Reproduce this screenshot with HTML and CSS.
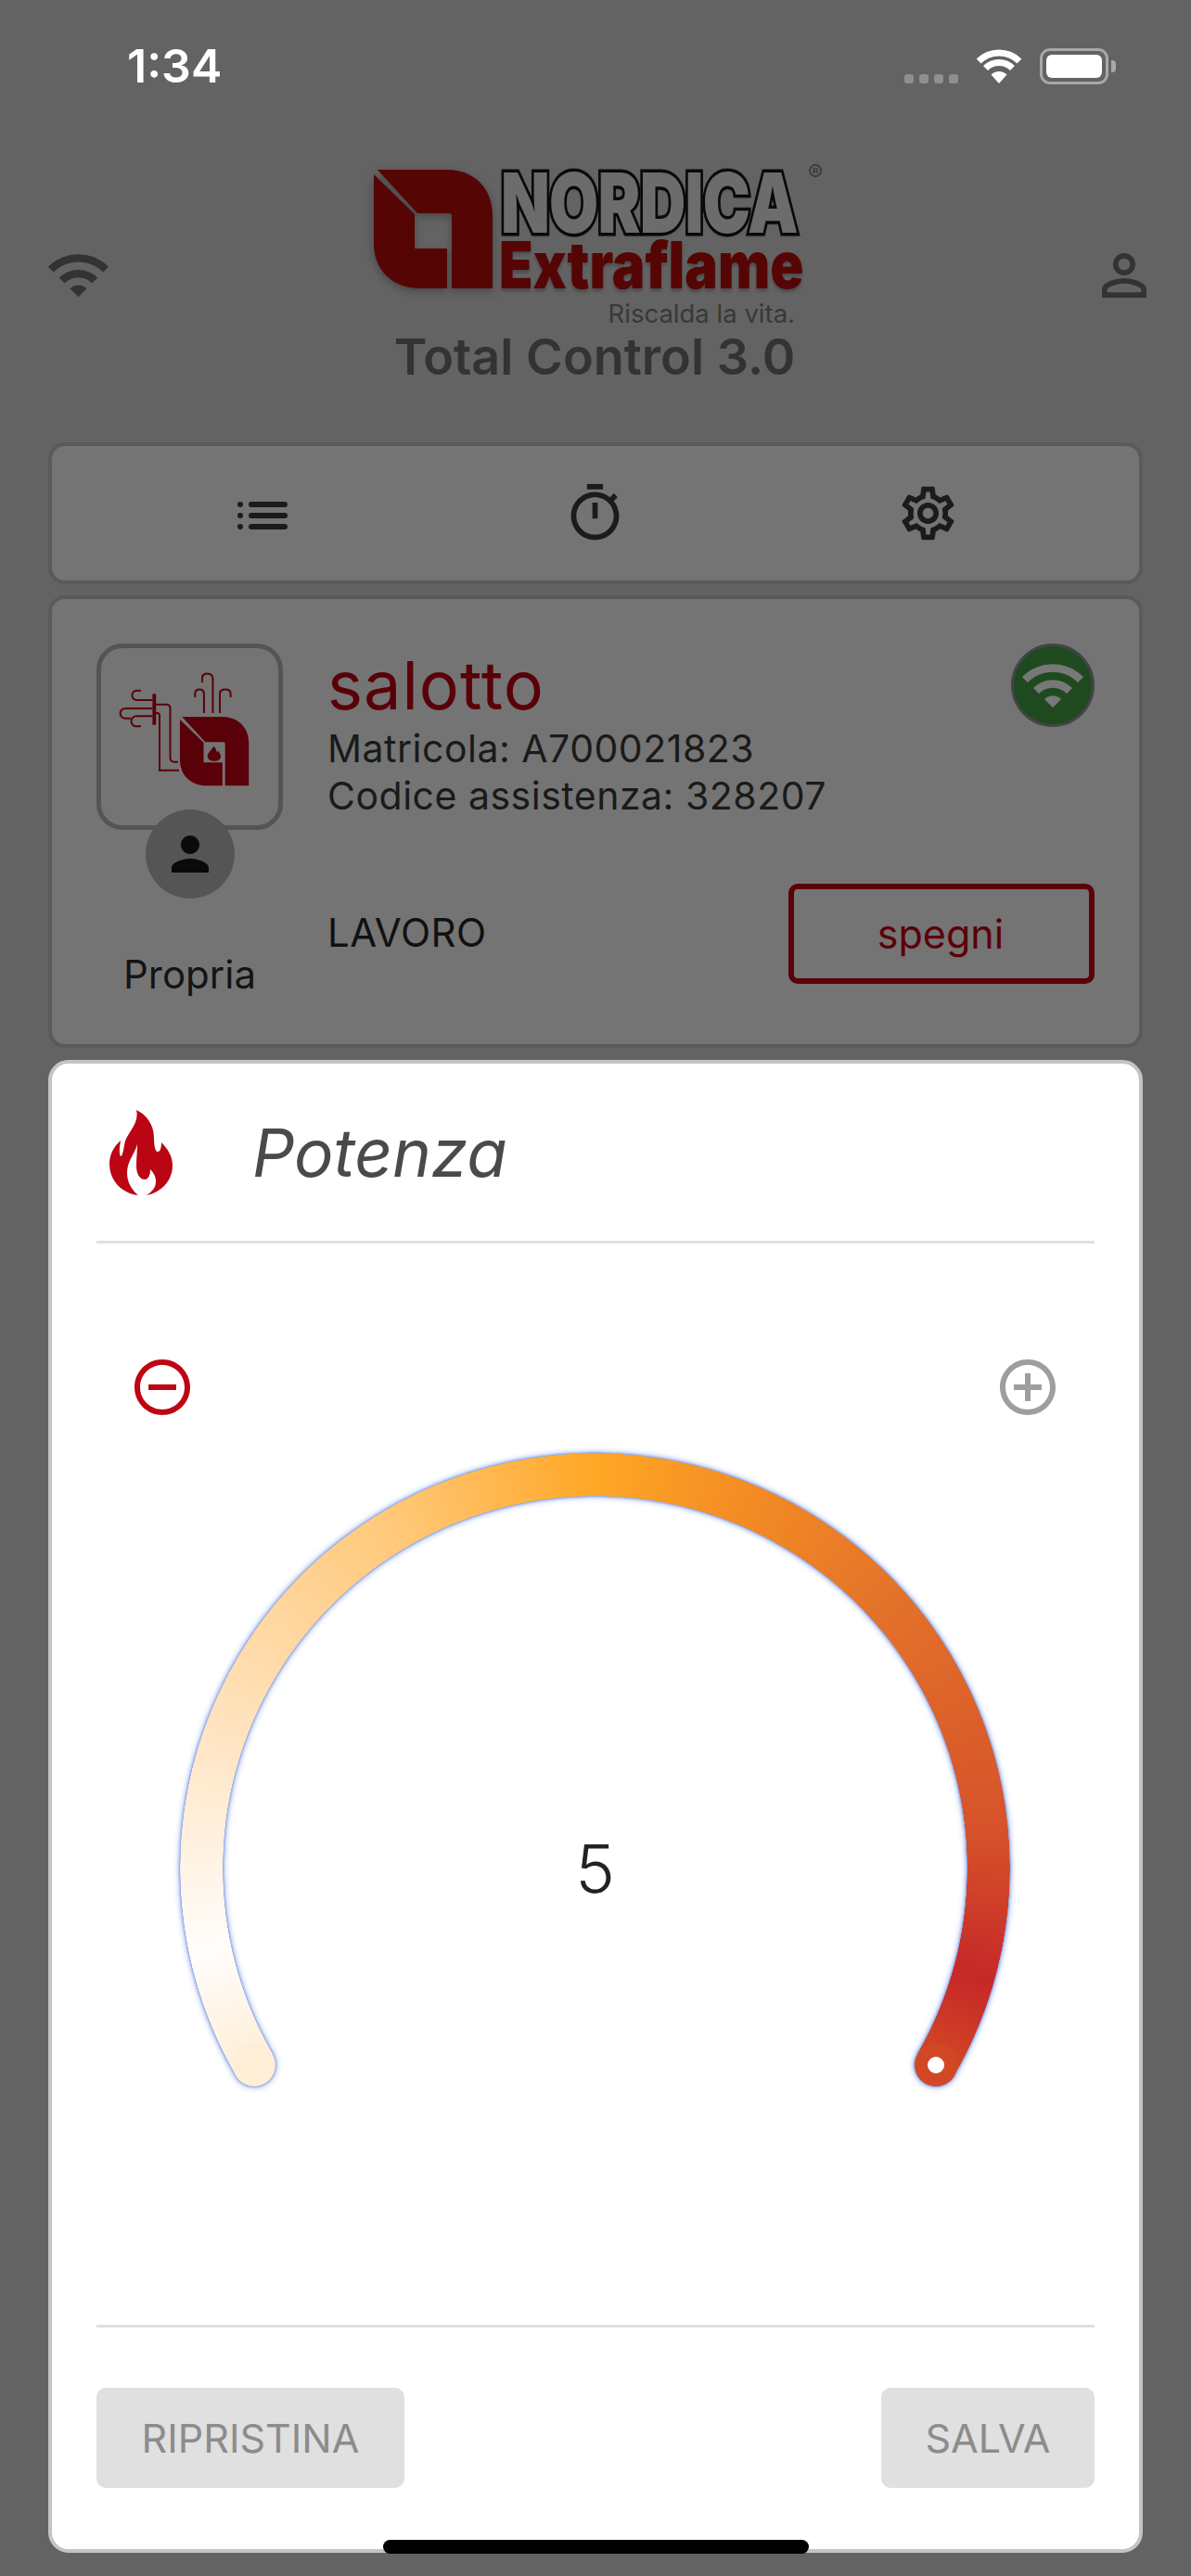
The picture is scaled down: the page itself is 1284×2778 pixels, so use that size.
FILE: index.html
```html
<!DOCTYPE html>
<html lang="it">
<head>
<meta charset="utf-8">
<title>Total Control 3.0</title>
<link rel="stylesheet" href="styles.css">
</head>
<body>
<div class="app">
  <div class="status">
    <span class="time">1:34</span>
    <div class="status-right">
      <div class="signal"><i></i><i></i><i></i><i></i></div>
      <svg class="status-wifi" viewBox="0 0 50 38"><g class="sw-arcs"><path d="M3.1 14.1A31 31 0 0 1 46.9 14.1"/><path d="M10.5 21.5A20.5 20.5 0 0 1 39.5 21.5"/></g><path class="sw-dot" d="M25 38L16.5 28.5A12 12 0 0 1 33.5 28.5Z"/></svg>
      <div class="battery"><div class="battery-fill"></div></div>
      <div class="battery-tip"></div>
    </div>
  </div>

  <header class="header">
    <svg class="hd-icon hd-wifi" viewBox="0 0 24 24"><path d="M1 9l2 2c4.97-4.97 13.03-4.97 18 0l2-2C16.93 2.93 7.08 2.93 1 9zm8 8l3 3 3-3c-1.65-1.66-4.34-1.66-6 0zm-4-4l2 2c2.76-2.76 7.24-2.76 10 0l2-2C15.14 9.14 8.87 9.14 5 13z"/></svg>
    <div class="brand">
      <div class="logo">
        <svg class="logo-mark" viewBox="0 0 128 128"><path d="M4 0H79C108 0 128 20 128 49V128H84V50Q84 47 81 47H47ZM0 5L44 48V85H79V128H50C20 128 0 108 0 80Z"/></svg>
        <div class="wordmark">
          <span class="w-nordica">NORDICA</span>
          <span class="w-reg">®</span>
          <span class="w-extra">Extraflame</span>
          <span class="w-tag">Riscalda la vita.</span>
        </div>
      </div>
      <div class="product">Total Control 3.0</div>
    </div>
    <svg class="hd-icon hd-user" viewBox="0 0 24 24"><path d="M12 5.9c1.16 0 2.1.94 2.1 2.1s-.94 2.1-2.1 2.1S9.9 9.16 9.9 8s.94-2.1 2.1-2.1m0 9c2.97 0 6.1 1.46 6.1 2.1v1.1H5.9V17c0-.64 3.13-2.1 6.1-2.1M12 4C9.79 4 8 5.79 8 8s1.79 4 4 4 4-1.79 4-4-1.79-4-4-4zm0 9c-2.67 0-8 1.34-8 4v3h16v-3c0-2.66-5.33-4-8-4z"/></svg>
  </header>

  <nav class="card tabs">
    <svg class="tab-list" viewBox="0 0 54 30"><rect x="0" y="0" width="6" height="6" rx="3"/><rect x="12" y="0" width="42" height="6" rx="3"/><rect x="0" y="12" width="6" height="6" rx="3"/><rect x="12" y="12" width="42" height="6" rx="3"/><rect x="0" y="24" width="6" height="6" rx="3"/><rect x="12" y="24" width="42" height="6" rx="3"/></svg>
    <svg class="tab-icon" viewBox="0 0 24 24"><path d="M15 1H9v2h6V1zm-4 13h2V8h-2v6zm8.03-6.61l1.42-1.42c-.43-.51-.9-.99-1.41-1.41l-1.42 1.42C16.07 4.74 14.12 4 12 4c-4.97 0-9 4.03-9 9s4.02 9 9 9 9-4.03 9-9c0-2.12-.74-4.07-1.97-5.61zM12 20c-3.87 0-7-3.13-7-7s3.13-7 7-7 7 3.13 7 7-3.13 7-7 7z"/></svg>
    <svg class="tab-icon" viewBox="0 0 24 24"><path d="M19.43 12.98c.04-.32.07-.64.07-.98 0-.34-.03-.66-.07-.98l2.11-1.65c.19-.15.24-.42.12-.64l-2-3.46c-.09-.16-.26-.25-.44-.25-.06 0-.12.01-.17.03l-2.49 1c-.52-.4-1.08-.73-1.69-.98l-.38-2.65C14.46 2.18 14.25 2 14 2h-4c-.25 0-.46.18-.49.42l-.38 2.65c-.61.25-1.17.59-1.69.98l-2.49-1c-.06-.02-.12-.03-.18-.03-.17 0-.34.09-.43.25l-2 3.46c-.13.22-.07.49.12.64l2.11 1.65c-.04.32-.07.65-.07.98 0 .33.03.66.07.98l-2.11 1.65c-.19.15-.24.42-.12.64l2 3.46c.09.16.26.25.44.25.06 0 .12-.01.17-.03l2.49-1c.52.4 1.08.73 1.69.98l.38 2.65c.03.24.24.42.49.42h4c.25 0 .46-.18.49-.42l.38-2.65c.61-.25 1.17-.59 1.69-.98l2.49 1c.06.02.12.03.18.03.17 0 .34-.09.43-.25l2-3.46c.12-.22.07-.49-.12-.64l-2.11-1.65zm-1.98-1.71c.04.31.05.52.05.73 0 .21-.02.43-.05.73l-.14 1.13.89.7 1.08.84-.7 1.21-1.27-.51-1.04-.42-.9.68c-.43.32-.84.56-1.25.73l-1.06.43-.16 1.13-.2 1.35h-1.4l-.19-1.35-.16-1.13-1.06-.43c-.43-.18-.83-.41-1.23-.71l-.91-.7-1.06.43-1.27.51-.7-1.21 1.08-.84.89-.7-.14-1.13c-.03-.31-.05-.54-.05-.74s.02-.43.05-.73l.14-1.13-.89-.7-1.08-.84.7-1.21 1.27.51 1.04.42.9-.68c.43-.32.84-.56 1.25-.73l1.06-.43.16-1.13.2-1.35h1.39l.19 1.35.16 1.13 1.06.43c.43.18.83.41 1.23.71l.91.7 1.06-.43 1.27-.51.7 1.21-1.07.85-.89.7.14 1.13zM12 8c-2.21 0-4 1.79-4 4s1.79 4 4 4 4-1.79 4-4-1.79-4-4-4zm0 6c-1.1 0-2-.9-2-2s.9-2 2-2 2 .9 2 2-.9 2-2 2z"/></svg>
  </nav>

  <section class="card device">
    <div class="device-left">
      <div class="device-thumb">
        <svg class="thumb-art" viewBox="0 0 191 191">
          <g class="thumb-lines">
            <path d="M109 37V32Q109 27.5 114.500 27.500Q120.400 27.500 120.400 33V70"/>
            <path d="M101.300 53V49Q101.300 44.500 106 44.500Q110.900 44.500 110.900 49V70"/>
            <path d="M128 70V49Q128 44.500 134 44.500Q139.600 44.500 139.600 49V53"/>
            <path d="M55.400 56H38A5.200 5.200 0 0 1 38 45.700H43"/>
            <path d="M55.400 65H26A5.300 5.300 0 0 0 26 75.700H32"/>
            <path d="M55.400 73.300H38A5.500 5.500 0 0 0 38 84.300H43"/>
            <path d="M59 60.700H70Q74.500 60.700 74.500 65V118Q74.500 122.700 79 122.700H83"/>
            <path d="M59 70H60.500Q63 70 63 73V131.700H84"/>
          </g>
          <rect class="thumb-fill" x="55.400" y="49.300" width="3.800" height="33.400"/>
          <path class="thumb-fill" transform="translate(85 74) scale(.58)" d="M4 0H79C108 0 128 20 128 49V128H84V50Q84 47 81 47H47ZM0 5L44 48V85H79V128H50C20 128 0 108 0 80Z"/>
          <path class="thumb-fill" d="M121.500 105.700C124 108.500 124.500 110 124.500 112.500C125.500 111.500 125.800 111 126 110.500C128 113 129 115 129 117C129 120 126 121.800 122 121.800C118 121.800 114.700 120 114.700 116.500C114.700 113 118 111 121.500 105.700Z"/>
        </svg>
      </div>
      <div class="owner-badge">
        <svg class="owner-icon" viewBox="0 0 24 24"><path d="M12 12c2.210 0 4-1.790 4-4s-1.790-4-4-4-4 1.790-4 4 1.790 4 4 4zm0 2c-2.670 0-8 1.340-8 4v2h16v-2c0-2.660-5.330-4-8-4z"/></svg>
      </div>
      <div class="owner-label">Propria</div>
    </div>
    <div class="device-main">
      <div class="device-top">
        <div class="device-info">
          <div class="device-name">salotto</div>
          <div class="device-meta">Matricola: A700021823</div>
          <div class="device-meta">Codice assistenza: 328207</div>
        </div>
        <div class="online">
          <svg class="online-icon" viewBox="0 0 24 24"><path d="M1 9l2 2c4.970-4.970 13.030-4.970 18 0l2-2C16.930 2.930 7.080 2.930 1 9zm8 8l3 3 3-3c-1.650-1.660-4.340-1.660-6 0zm-4-4l2 2c2.760-2.760 7.240-2.760 10 0l2-2C15.140 9.140 8.870 9.140 5 13z"/></svg>
        </div>
      </div>
      <div class="device-bottom">
        <div class="device-state">LAVORO</div>
        <button class="btn-off">spegni</button>
      </div>
    </div>
  </section>

  <section class="panel">
    <div class="panel-head">
      <svg class="flame" viewBox="0 0 68 92">
        <path class="flame-outer" d="M29 0C40 5 48 16 48 30C48 37 49 45 52 45C55 45 56 40 56 35C63 42 68 50 68 60C68 76 56 89 40 92H31C13 90 0 76 0 58C0 48 5 39 12 33C11 40 10 46 12 50C14 50 15 44 16 38C17 26 33 16 29 0Z"/>
        <path class="flame-inner" d="M30 37C27 48 19 55 19 68C19 79 25 87 31 92H40C46 88 50 84 50 77C50 71 47 67 44 64C44 70 42 75 38 75C32 75 29 68 29 60C29 52 30 45 30 37Z"/>
      </svg>
      <h2 class="panel-title">Potenza</h2>
    </div>
    <div class="panel-body">
      <div class="stepper">
        <svg class="step minus" viewBox="0 0 24 24"><path d="M7 11v2h10v-2H7zm5-9C6.480 2 2 6.480 2 12s4.480 10 10 10 10-4.480 10-10S17.520 2 12 2zm0 18c-4.410 0-8-3.590-8-8s3.590-8 8-8 8 3.590 8 8-3.590 8-8 8z"/></svg>
        <svg class="step plus" viewBox="0 0 24 24"><path d="M13 7h-2v4H7v2h4v4h2v-4h4v-2h-4V7zm-1-5C6.480 2 2 6.480 2 12s4.480 10 10 10 10-4.480 10-10S17.520 2 12 2zm0 18c-4.410 0-8-3.590-8-8s3.590-8 8-8 8 3.590 8 8-3.590 8-8 8z"/></svg>
      </div>
      <div class="gauge">
        <div class="gauge-arc">
          <div class="gauge-ring"></div>
          <div class="cap cap-start"></div>
          <div class="cap cap-end"></div>
        </div>
        <div class="knob"></div>
        <div class="gauge-value">5</div>
      </div>
    </div>
    <div class="panel-foot">
      <button class="btn-flat btn-reset">RIPRISTINA</button>
      <button class="btn-flat btn-save">SALVA</button>
    </div>
  </section>
  <div class="home-bar"></div>
</div>
</body>
</html>
```

FILE: styles.css
```css
* { box-sizing: border-box; }
html, body { margin: 0; padding: 0; }
body {
  width: 1284px;
  height: 2778px;
  overflow: hidden;
  background: #636363;
  font-family: Inter, "Liberation Sans", sans-serif;
}
.app { position: relative; width: 1284px; height: 2778px; }

/* status bar */
.status {
  height: 170px;
  display: flex;
  justify-content: space-between;
  align-items: flex-start;
  padding: 42px 81px 0 137px;
}
.time { font-size: 50px; line-height: 58px; font-weight: 600; color: #fff; }
.status-right { display: flex; align-items: flex-start; padding-top: 10px; }
.signal { display: flex; gap: 6px; margin-top: 28px; margin-right: 19px; }
.signal i { display: block; width: 10px; height: 10px; border-radius: 3px; background: #8f8f8f; }
.status-wifi { width: 50px; height: 38px; margin-right: 19px; }
.sw-arcs { fill: none; stroke: #fff; stroke-width: 7; }
.sw-dot { fill: #fff; }
.battery { width: 74px; height: 39px; border: 3px solid #a8a8a8; border-radius: 11px; padding: 4px; }
.battery-fill { width: 100%; height: 100%; background: #fff; border-radius: 6px; }
.battery-tip { width: 5px; height: 13px; margin: 13px 0 0 3px; background: #a8a8a8; border-radius: 0 4px 4px 0; }

/* header */
.header {
  height: 307px;
  display: flex;
  justify-content: space-between;
  align-items: flex-start;
  padding: 0 36px 0 49px;
}
.hd-icon { display: block; fill: #333; margin-top: 91px; }
.hd-wifi { width: 71px; height: 71px; }
.hd-user { width: 72px; height: 72px; }
.brand { display: flex; flex-direction: column; align-items: center; width: 476px; margin-right: 14px; }
.logo { display: flex; gap: 7px; width: 476px; height: 185px; padding-top: 13px; }
.logo-mark { width: 128px; height: 128px; fill: #560505; filter: drop-shadow(0 3px 4px rgba(0,0,0,.3)); flex: none; }
.wordmark { position: relative; flex: 1; display: flex; flex-direction: column; }
.w-nordica {
  display: block;
  height: 72px;
  font: 900 90px/72px Inter, sans-serif;
  color: #6c6c6c;
  -webkit-text-stroke: 7px #0b0b0b;
  paint-order: stroke fill;
  letter-spacing: -1px;
  transform: scaleX(.763);
  transform-origin: 0 50%;
  white-space: nowrap;
  margin-left: 2px;
  text-shadow: 0 3px 4px rgba(0,0,0,.3);
}
.w-reg { position: absolute; left: 333px; top: -10px; font: 400 24px/28px Inter, sans-serif; color: #3a3a3a; }
.w-extra {
  display: block;
  height: 51px;
  margin-top: 5px;
  font: 900 70px/51px Inter, sans-serif;
  color: #560505;
  transform: scaleX(.853);
  transform-origin: 0 50%;
  white-space: nowrap;
  text-shadow: 0 3px 4px rgba(0,0,0,.25);
}
.w-tag { margin-top: 11px; width: 319px; text-align: right; font-size: 27.5px; line-height: 32px; color: #383838; white-space: nowrap; }
.product { font-size: 54px; line-height: 60px; font-weight: 600; color: #333; white-space: nowrap; margin-top: 0; }

/* cards */
.card { width: 1180px; margin-left: 52px; background: #747474; border: 4px solid #5a5a5a; border-radius: 18px; }
.tabs { height: 153px; display: grid; grid-template-columns: 351px 359px 1fr; align-items: center; padding: 0 0 0 200px; margin-bottom: 12px; }
.tab-list { width: 54px; height: 30px; fill: #1b1b1b; margin-top: 4px; }
.tab-icon { width: 69px; height: 69px; fill: #1b1b1b; }
.device { height: 488px; display: flex; padding: 48px 48px 0; gap: 48px; }
.device-left { width: 201px; flex: none; display: flex; flex-direction: column; align-items: center; }
.device-thumb { width: 201px; height: 201px; border: 5px solid #545454; border-radius: 28px; flex: none; }
.thumb-art { display: block; width: 191px; height: 191px; }
.thumb-lines { fill: none; stroke: #5a0008; stroke-width: 2; }
.thumb-fill { fill: #5a0008; }
.owner-badge { width: 96px; height: 96px; margin-top: -22px; border-radius: 50%; background: #555; display: flex; align-items: center; justify-content: center; position: relative; }
.owner-icon { width: 60px; height: 60px; fill: #0a0a0a; }
.owner-label { margin-top: 59px; font-size: 42px; line-height: 46px; color: #141414; }
.device-main { flex: 1; display: flex; flex-direction: column; }
.device-top { display: flex; justify-content: space-between; height: 259px; }
.device-name { font-size: 72px; line-height: 86px; color: #5a0008; letter-spacing: 1px; margin-top: 2px; }
.device-meta { font-size: 41px; line-height: 51px; color: #1a1a1a; letter-spacing: .5px; }
.online { width: 90px; height: 90px; border-radius: 50%; background: #1f4a20; border: 3px solid #444; display: flex; align-items: center; justify-content: center; }
.online-icon { width: 72px; height: 72px; fill: #787878; }
.device-bottom { display: flex; justify-content: space-between; align-items: center; height: 108px; }
.device-state { font-size: 42px; line-height: 46px; color: #111; letter-spacing: .5px; margin-top: -3px; }
.btn-off { width: 330px; height: 108px; background: none; border: 6px solid #5c0009; border-radius: 10px; font: 400 43px/46px Inter, sans-serif; color: #5c0009; padding: 0 2px 0 0; }

/* panel */
.panel { width: 1180px; height: 1610px; margin: 13px 0 0 52px; background: #fff; border: 4px solid #c4c4c4; border-radius: 22px; padding: 0 48px; display: flex; flex-direction: column; }
.panel-head { height: 194px; flex: none; display: flex; align-items: center; border-bottom: 3px solid #e0e0e0; padding: 0 0 0 14px; gap: 86px; }
.flame { width: 68px; height: 92px; flex: none; }
.flame-outer { fill: #bb0414; }
.flame-inner { fill: #fff; }
.panel-title { margin: 0; font-size: 71px; line-height: 80px; font-weight: 400; font-style: italic; color: #4a4a4a; }
.panel-body { flex: 1; position: relative; padding-top: 119px; }
.stepper { display: flex; justify-content: space-between; padding: 0 36px 0 35px; height: 72px; }
.step { width: 72px; height: 72px; }
.minus { fill: #bf0413; }
.plus { fill: #9e9e9e; }
.gauge { position: relative; width: 895px; height: 895px; margin: 35px 0 0 90px; display: grid; place-items: center; }
.gauge-arc { position: absolute; inset: 0; filter: drop-shadow(0 0 1.500px #5f82e0) drop-shadow(0 0 3px #7f9be6); }
.gauge-ring {
  position: absolute;
  inset: 0;
  border-radius: 50%;
  background: conic-gradient(from 240deg,
    #ffeed6 0deg, #fffdfb 18deg, #fff4e6 30deg, #ffdcae 60deg, #ffc878 90deg, #ffa726 120deg,
    #f48c24 142deg, #e2702a 170deg, #d6522a 205deg, #c62828 226deg, #d24825 240deg,
    transparent 240deg, transparent 360deg);
  -webkit-mask: radial-gradient(circle closest-side, transparent 401px, #000 401.500px, #000 447px, transparent 447.500px);
  mask: radial-gradient(circle closest-side, transparent 401px, #000 401.500px, #000 447px, transparent 447.500px);
}
.cap { position: absolute; top: 637px; width: 46px; height: 46px; border-radius: 50%; }
.cap-start { left: 57px; background: #ffeed6; }
.cap-end { left: 792px; background: #d24825; }
.knob { position: absolute; top: 651px; left: 806px; width: 18px; height: 18px; border-radius: 50%; background: #fff; }
.gauge-value { font-size: 72px; line-height: 80px; font-weight: 300; color: #222; }
.panel-foot { height: 242px; flex: none; border-top: 3px solid #e0e0e0; display: flex; justify-content: space-between; padding-top: 65px; align-items: flex-start; }
.btn-flat { height: 108px; background: #e0e0e0; border: 0; border-radius: 10px; font: 400 43px/46px Inter, sans-serif; color: #8c8c8c; padding: 0; }
.btn-reset { width: 332px; }
.btn-save { width: 230px; }

.home-bar { position: absolute; left: 413px; top: 2739px; width: 459px; height: 15px; background: #000; border-radius: 8px; }
```
